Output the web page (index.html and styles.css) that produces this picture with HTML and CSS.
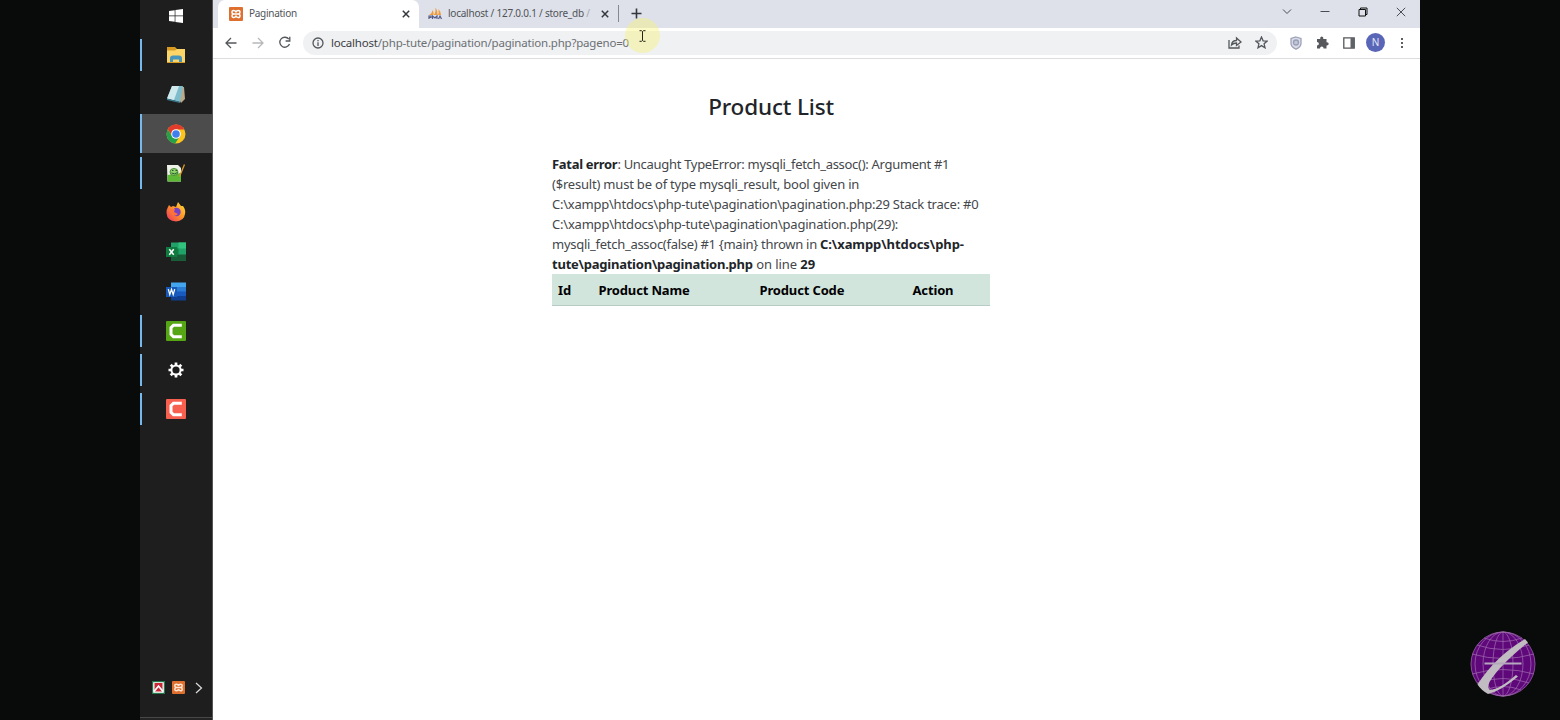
FILE: index.html
```html
<!DOCTYPE html>
<html lang="en">
<head>
<meta charset="utf-8">
<title>Pagination</title>
<link rel="stylesheet" href="styles.css">
</head>
<body>
<div class="stage">
<aside class="taskbar">
  <div class="task first"><svg width="14" height="14" viewBox="0 0 14 14" fill="#fff"><path d="M0 2l5.700-.8v5.400H0zM6.400 1.100L14 0v6.600H6.400zM0 7.300h5.700v5.400L0 12zM6.400 7.300H14V14l-7.600-1.100z"/></svg></div>
  <div class="task open"><svg width="20" height="18" viewBox="0 0 20 18"><path d="M1 1h8l2 2h8v14H1z" fill="#d99a22"/><path d="M1 4.500h8l2-1.500h8v13H1z" fill="#fbd568"/><path d="M4 16v-3.500q0-3 3-3h6q3 0 3 3V16h-3v-2.500H7V16z" fill="#4795bd"/></svg></div>
  <div class="task"><svg width="20" height="20" viewBox="0 0 20 20"><path d="M7 3l11 0 1 12-4 4z" fill="#b9ab8c"/><path d="M6 2l11 0-3 16L1 14.500z" fill="#7fbccb"/><path d="M6 2l7 0-5 14-7-1.500z" fill="#cfe9ed"/><path d="M1 14.500L14 18l0 1L1 16z" fill="#3c7c90"/></svg></div>
  <div class="task open active"><svg width="20" height="20" viewBox="0 0 20 20"><circle cx="10" cy="10" r="9.500" fill="#fbc51d"/><path d="M1.800 5.200A9.500 9.500 0 0 1 18.300 5.500H10L6 12z" fill="#e23b2e"/><path d="M1.800 5.200A9.500 9.500 0 0 0 9.200 19.500L14 12l-8 0z" fill="#25a04b"/><circle cx="10" cy="10" r="4.800" fill="#fff"/><circle cx="10" cy="10" r="3.800" fill="#3f80ee"/></svg></div>
  <div class="task open"><svg width="20" height="20" viewBox="0 0 20 20"><path d="M1 2h11l3 3v13.500H1.500z" fill="#eef2e6"/><path d="M1.500 12l13.500-2v8.500H1.500z" fill="#5cb835"/><ellipse cx="8" cy="9" rx="4" ry="3.500" fill="#8ed26b" stroke="#4d8c3c"/><path d="M5.500 10q3 2 6-.5M6 7.500h1.500m2 0H11" stroke="#285b27" fill="none"/><path d="M13 13l5-12 1 1-5 12z" fill="#d89b2a"/></svg></div>
  <div class="task"><svg width="20" height="20" viewBox="0 0 20 20"><defs><linearGradient id="fox" x1="1" y1="0" x2="0" y2="1"><stop offset="0" stop-color="#ffe23c"/><stop offset=".45" stop-color="#ff9728"/><stop offset="1" stop-color="#ef2e63"/></linearGradient></defs><path d="M2 5l1-2 2 2 2-1 3 1 2-5 3 4 2 0q3 4 2 8-1 7-9 7.500Q1 19 .5 11 .5 7 2 5z" fill="url(#fox)"/><circle cx="10.500" cy="10" r="4.200" fill="#7542c6"/><path d="M4 7l5 0-1 3 4 2q-3 3-6 1z" fill="#ff7139"/></svg></div>
  <div class="task"><svg width="20" height="19" viewBox="0 0 20 19"><path d="M5 .5h15v18H5z" fill="#20a268"/><path d="M12.500.5H20v6h-7.500z" fill="#31c27e"/><path d="M5 6.500h7.500v6H5z" fill="#107c41"/><path d="M5 12.500h15v6H5z" fill="#185c37"/><path d="M0 5h11v10H0z" fill="#107b41"/><path d="M3.300 7.200l4.400 5.600m0-5.600l-4.400 5.600" stroke="#fff" stroke-width="1.500"/></svg></div>
  <div class="task"><svg width="20" height="19" viewBox="0 0 20 19"><path d="M5 .5h15v5H5z" fill="#42a5ee"/><path d="M5 5h15v5H5z" fill="#2b7cd3"/><path d="M5 9.500h15V14H5z" fill="#185abd"/><path d="M5 14h15v4.500H5z" fill="#103f91"/><path d="M0 5h11v10H0z" fill="#1758b9"/><path d="M2.300 7.200l1.500 5.400 1.700-5.200 1.700 5.200 1.500-5.400" fill="none" stroke="#fff" stroke-width="1.300"/></svg></div>
  <div class="task open"><svg width="20" height="20" viewBox="0 0 20 20"><rect width="20" height="20" rx="1" fill="#55a514"/><path d="M15.800 4.200H7.500L5 6.700v6.600l2.500 2.500h8.300" fill="none" stroke="#fff" stroke-width="3"/></svg></div>
  <div class="task open"><svg width="16" height="16" viewBox="0 0 16 16" fill="none" stroke="#fff"><circle cx="8" cy="8" r="4.600" stroke-width="2"/><path d="M8 .5V3m0 10v2.500M.5 8H3m10 0h2.500M2.700 2.700l1.700 1.700m7.200 7.200l1.700 1.700m0-10.600l-1.700 1.700m-7.200 7.200l-1.700 1.700" stroke-width="2.700"/></svg></div>
  <div class="task open"><svg width="20" height="20" viewBox="0 0 20 20"><rect width="20" height="20" rx="1" fill="#f75f4e"/><path d="M15.800 4.200H7.500L5 6.700v6.600l2.500 2.500h8.300" fill="none" stroke="#fff" stroke-width="3"/></svg></div>
  <div class="tray">
    <svg width="13" height="13" viewBox="0 0 13 13"><path d="M0 0h13v13H0z" fill="#257a4d"/><path d="M1.200 1.200h10.600v10.600H1.200z" fill="#fff"/><path d="M2.500 2h8v8.500h-8z" fill="#c92735"/><path d="M2 10.500L6.500 5l4.500 5.500" fill="none" stroke="#fff" stroke-width="1.700"/></svg>
    <svg width="13" height="13" viewBox="0 0 14 14"><rect width="14" height="14" rx="1" fill="#df6f2e"/><path d="M4.800 7Q3 7 3 5.200T4.800 3.500 7 5.300Q7.400 3.500 9.200 3.500T11 5.200 9.200 7Q11 7 11 8.800T9.200 10.500 7 8.700Q6.600 10.500 4.800 10.500T3 8.800 4.800 7H9.200" fill="none" stroke="#ffe7d6" stroke-width="1.600"/></svg>
    <svg class="more" width="8" height="12" viewBox="0 0 8 12" fill="none" stroke="#ddd" stroke-width="1.200"><path d="M1 1l5.500 5L1 11"/></svg>
  </div>
</aside>
<main class="browser">
  <header class="tabs">
    <div class="tab current">
      <svg width="14" height="14" viewBox="0 0 14 14"><rect width="14" height="14" rx="1" fill="#df6f2e"/><path d="M4.800 7Q3 7 3 5.200T4.800 3.500 7 5.300Q7.400 3.500 9.200 3.500T11 5.200 9.200 7Q11 7 11 8.800T9.200 10.500 7 8.700Q6.600 10.500 4.800 10.500T3 8.800 4.800 7H9.200" fill="none" stroke="#fff" stroke-width="1.500"/></svg>
      <span class="name">Pagination</span>
      <svg class="x" width="8" height="8" viewBox="0 0 8 8"><path d="M.8.8l6.400 6.400m0-6.400L.8 7.200" stroke="#34373b" stroke-width="1.500"/></svg>
    </div>
    <div class="tab other">
      <svg width="14" height="13" viewBox="0 0 14 13"><path d="M1 8q3-1 3.500-5Q6 5 5.500 8zM6 8Q8 5 7.500.5 10 4 9.500 8zM10 8q1-2 .5-6Q13 5 13 8z" fill="#f39a35"/><path d="M1 12V9h2v1.500H1m3.500 1.500V9L7 11l2-2v3m1.500 0L12 9l1.500 3" fill="none" stroke="#555b87" stroke-width="1.200"/></svg>
      <span class="name db">localhost / 127.0.0.1 / store_db <i>/</i></span>
      <svg class="x" width="8" height="8" viewBox="0 0 8 8"><path d="M.8.8l6.400 6.400m0-6.400L.8 7.200" stroke="#34373b" stroke-width="1.500"/></svg>
    </div>
    <div class="rule"></div>
    <svg class="plus" width="11" height="11" viewBox="0 0 11 11"><path d="M5.500.5v10m-5-5h10" stroke="#34373b" stroke-width="1.600"/></svg>
    <div class="window">
      <svg width="10" height="10" viewBox="0 0 10 10"><path d="M1 2.500l4 4 4-4"/></svg>
      <svg width="10" height="10" viewBox="0 0 10 10"><path d="M.5 4.500h9"/></svg>
      <svg class="dark" width="10" height="10" viewBox="0 0 10 10"><path d="M1 2.500h6.500V9H1zM2.500 2.500V1H9v6.500H7.500"/></svg>
      <svg width="10" height="10" viewBox="0 0 10 10"><path d="M.8.8l8.400 8.400m0-8.400L.8 9.200"/></svg>
    </div>
  </header>
  <nav class="toolbar">
    <svg width="12" height="12" viewBox="0 0 12 12"><path d="M11.500 6H1m5-5L1 6l5 5"/></svg>
    <svg class="faded" width="12" height="12" viewBox="0 0 12 12"><path d="M.5 6H11M6 1l5 5-5 5"/></svg>
    <svg class="reload" width="13" height="13" viewBox="0 0 13 13"><path d="M10.800 3.200A5 5 0 1 0 11.500 8M11.800.8V5H7.600"/></svg>
    <div class="omni">
      <svg width="12" height="12" viewBox="0 0 12 12"><circle cx="6" cy="6" r="5"/><path d="M6 5.200V9M6 3v1.200"/></svg>
      <span class="url"><b>localhost</b>/php-tute/pagination/pagination.php?pageno=0</span>
      <svg class="share" width="14" height="13" viewBox="0 0 14 13"><path d="M1 4v8h10V9.500M3.500 9Q4 4.500 8.500 4.500V2L13 6 8.500 9.500V7Q5.500 7 3.500 9z"/></svg>
      <svg width="13" height="13" viewBox="0 0 13 13"><path d="M6.500 1l1.600 3.800 4 .3-3 2.700.9 4-3.500-2.200L3 11.800l.9-4-3-2.700 4-.3z"/></svg>
    </div>
    <div class="tools">
      <svg width="12" height="14" viewBox="0 0 12 14"><path d="M6 1l5 1.500v5Q11 11 6 13.200 1 11 1 7.500v-5z" fill="#d9dbe8" stroke="#9da2b9"/><circle cx="6" cy="6.500" r="2.500" fill="#c3c6d6" stroke="#999eb7"/></svg>
      <svg width="13" height="13" viewBox="0 0 13 13"><path d="M1 3h3.200q-.5-2.400 1.500-2.500T7.300 3h3.200v3.200Q12.700 6 12.700 7.800t-2.200 1.600v3H7.600q0-2-1.800-2T4 12.400H1V9.500q1.900 0 1.900-1.700T1 6.100z" fill="#56585c" stroke="none"/></svg>
      <svg width="12" height="12" viewBox="0 0 12 12"><path d="M.8.8h10.400v10.400H.8z"/><path d="M7.500 1h4v10h-4z" fill="#5f6368" stroke="none"/></svg>
      <div class="avatar">N</div>
      <svg class="dots" width="4" height="12" viewBox="0 0 4 12"><path d="M1 1h2v2H1zM1 5h2v2H1zM1 9h2v2H1z" fill="#5b5e63" stroke="none"/></svg>
    </div>
  </nav>
  <section class="page">
    <h1>Product List</h1>
    <div class="error">
      <div class="l1"><b>Fatal error</b>: Uncaught TypeError: mysqli_fetch_assoc(): Argument #1</div>
      <div class="l2">($result) must be of type mysqli_result, bool given in</div>
      <div class="l3">C:\xampp\htdocs\php-tute\pagination\pagination.php:29 Stack trace: #0</div>
      <div class="l4">C:\xampp\htdocs\php-tute\pagination\pagination.php(29):</div>
      <div class="l5">mysqli_fetch_assoc(false) #1 {main} thrown in <b>C:\xampp\htdocs\php-</b></div>
      <div class="l6"><b>tute\pagination\pagination.php</b> on line <b class="num">29</b></div>
    </div>
    <div class="products"><b>Id</b><b>Product Name</b><b>Product Code</b><b>Action</b></div>
  </section>
</main>
<div class="pointer"><svg width="7" height="12" viewBox="0 0 7 12"><path d="M.5.7h2l1 .8 1-.8h2M3.500 1.500v9M.5 11.300h2l1-.8 1 .8h2" fill="none" stroke="#242416"/></svg></div>
<svg class="brand" width="68" height="68" viewBox="0 0 68 68"><circle cx="34" cy="34" r="32" fill="#5e087a"/><g fill="none" stroke="#9a62aa" stroke-width=".8"><circle cx="34" cy="34" r="32"/><ellipse cx="34" cy="34" rx="10" ry="32"/><ellipse cx="34" cy="34" rx="20" ry="32"/><ellipse cx="34" cy="34" rx="28" ry="32"/><path d="M34 2v64M15 8q19 7 38 0M8 15q26 9 52 0M3 24q31 9 62 0M3 44q31-9 62 0M8 53q26-9 52 0M16 60q18-7 36 0"/></g><path d="M56 9L59 12.500Q31 35 20.500 52Q18 58 21 60Q31 59 47 45L49 46.500Q32 61 19 64Q12 60 8.500 54.500Q26 27 56 9z" fill="#c0bcc2"/><path d="M15.500 32.500h37v2h-37z" fill="#b6a7bd"/></svg>
</div>
</body>
</html>
```
FILE: styles.css
```css
* { box-sizing: border-box; }
body { margin: 0; background: #090b0a; font-family: "Noto Sans", sans-serif; }
.stage { position: relative; width: 1560px; height: 720px; padding: 0 140px; display: flex; overflow: hidden; }
svg { display: block; flex: none; }
.taskbar { width: 73px; height: 720px; flex: none; background: #1e1e1e; border-right: 1px solid #555; display: flex; flex-direction: column; }
.task { height: 39.4px; flex: none; display: flex; align-items: center; justify-content: center; background-repeat: no-repeat; background-position: 0 50%; background-size: 2px 32px; }
.first { height: 35.2px; padding-bottom: 4px; }
.open { background-image: linear-gradient(#76b9ed, #76b9ed); }
.active { background-color: #4c4c4c; background-size: 2px 40px; }
.tray { margin-top: auto; height: 63px; display: flex; align-items: center; gap: 7px; padding: 0 0 0 12px; border-bottom: 2px solid #242424; box-shadow: inset 0 -1px #484848; }
.more { margin-left: 3px; }
.browser { width: 1207px; flex: none; background: #fff; }
.tabs { height: 28px; display: flex; background: #dee1e9; }
.tab { display: flex; align-items: center; height: 28px; padding-bottom: 1px; }
.current { margin-left: 5px; width: 201px; background: #fff; border-radius: 7px 7px 0 0; padding-left: 11px; padding-right: 9px; }
.other { width: 199px; padding-left: 9px; padding-right: 9px; }
.name { margin: -2px 0 0 6px; font-size: 10px; letter-spacing: -.28px; color: #505358; white-space: nowrap; }
.db { letter-spacing: -.23px; }
.name i { font-style: normal; color: #a5a8af; }
.x { margin-left: auto; }
.rule { width: 1px; height: 17px; margin: 5px 12px 0 0; background: #85888f; }
.plus { margin-top: 8px; }
.window { margin-left: auto; display: flex; gap: 28px; padding: 7px 14px 0 0; fill: none; stroke: #494c52; }
.dark { stroke: #111; }
.toolbar { height: 31px; display: flex; align-items: center; padding: 0 16px 1px 12px; border-bottom: 1px solid #dcdde0; fill: none; stroke: #54575b; stroke-width: 1.3; }
.toolbar > svg { margin-right: 15px; }
.toolbar > .faded { margin-right: 14px; }
.toolbar > .reload { margin-right: 12px; }
.faded { stroke: #b6b8bb; }
.omni { width: 974px; height: 24px; display: flex; align-items: center; background: #eff1f3; border-radius: 12px; padding: 0 9px; }
.url { margin-left: 7px; font-size: 11.5px; letter-spacing: -.2px; color: #6c6f73; white-space: nowrap; }
.url b { font-weight: 400; color: #3c3e42; }
.share { margin-left: auto; margin-right: 13px; }
.tools { margin-left: auto; display: flex; align-items: center; gap: 14px; }
.dots { margin-left: 4px; }
.avatar { width: 19px; height: 19px; border-radius: 50%; background: #5966b8; color: #e8e9f6; font-size: 10px; line-height: 19px; text-align: center; margin: 0 -3px; }
.page { width: 438px; margin: 0 0 0 339px; padding-top: 31px; color: #44474b; }
h1 { margin: 0; height: 64px; font-size: 22.5px; letter-spacing: -.17px; font-weight: 500; line-height: 34px; text-align: center; color: #212529; white-space: nowrap; }
.error { font-size: 13px; line-height: 20px; white-space: nowrap; }
.error b { color: #212529; font-weight: 700; }
.l1 { letter-spacing: -.3px; }
.l2 { letter-spacing: -.2px; }
.l3 { letter-spacing: -.23px; }
.l4 { letter-spacing: -.21px; }
.l5 { letter-spacing: -.28px; }
.l5 b { letter-spacing: -.07px; }
.l6 b { letter-spacing: -.23px; }
.l6 { letter-spacing: -.08px; }
.l6 .num { letter-spacing: 0; }
.products { height: 32px; display: grid; grid-template-columns: 40.5px 161px 153px 1fr; align-items: center; padding-left: 6px; background: #d1e5dd; border-bottom: 1px solid #b6cbc3; color: #000; font-size: 13px; letter-spacing: -.15px; white-space: nowrap; }
.pointer { position: absolute; left: 625px; top: 18px; width: 35px; height: 35px; border-radius: 50%; background: rgba(247, 242, 120, .42); display: flex; align-items: center; justify-content: center; }
.brand { position: absolute; left: 1469px; top: 630px; }
```
